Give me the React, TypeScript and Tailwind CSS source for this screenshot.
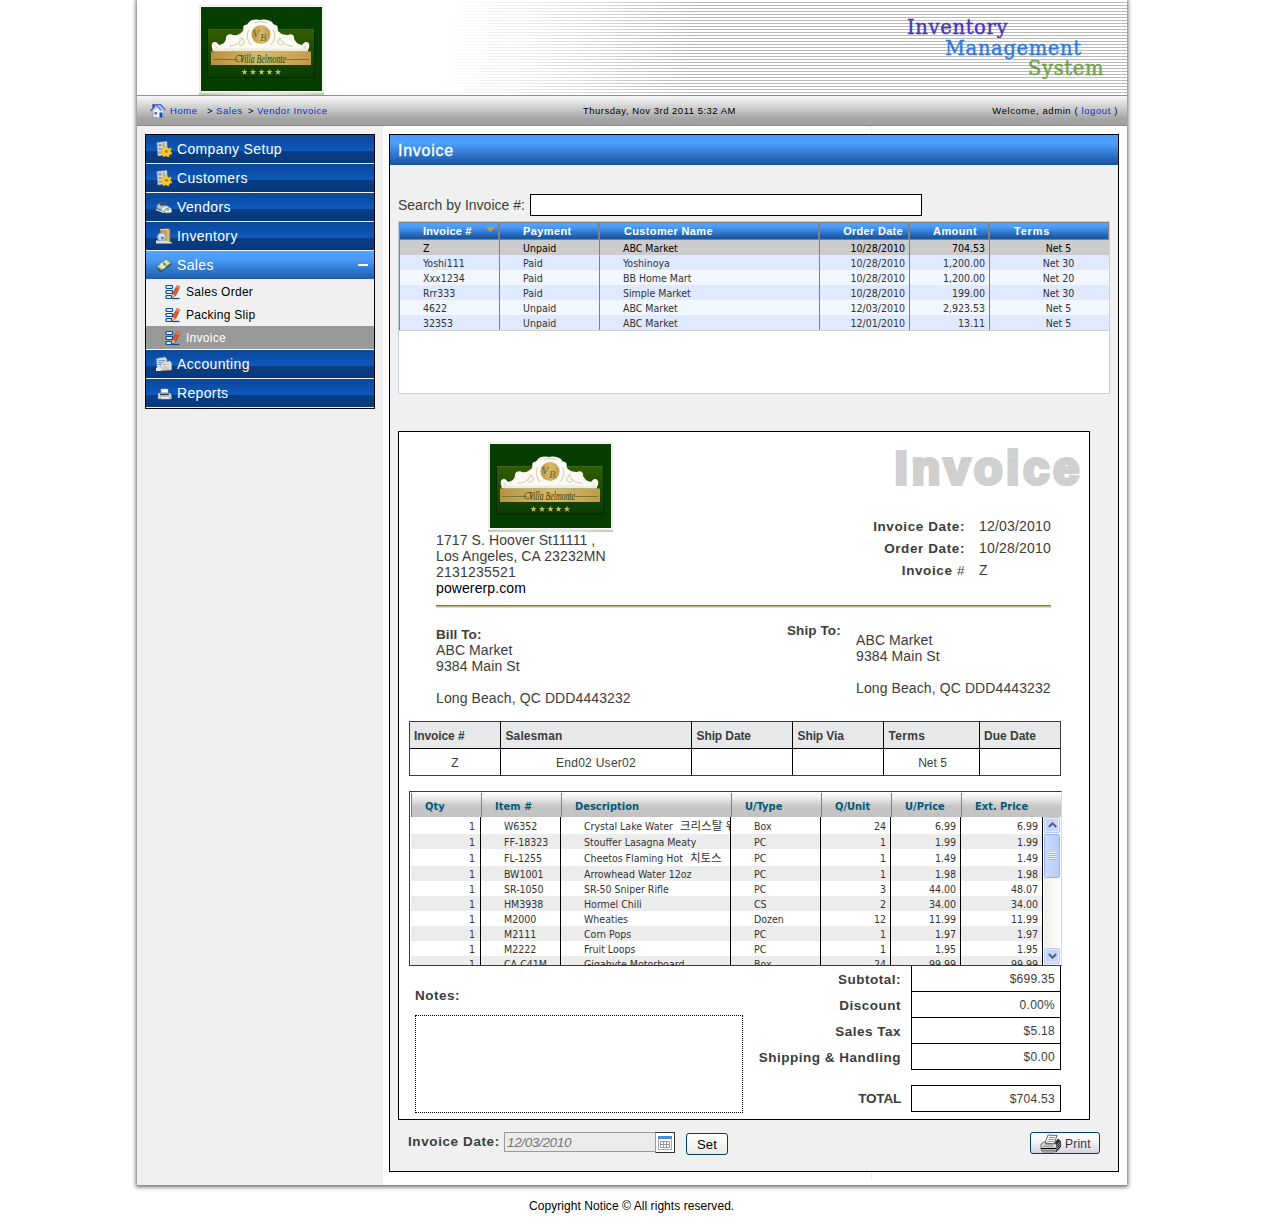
import React from "react";

function VillaLogo() {
  return (
    <svg width="125" height="90" viewBox="0 0 125 90" className="block">
      <defs>
        <linearGradient id="gold" x1="0" x2="1">
          <stop offset="0" stopColor="#b8913f" />
          <stop offset=".5" stopColor="#d8ba6c" />
          <stop offset="1" stopColor="#c39b49" />
        </linearGradient>
        <linearGradient id="panel" x1="0" x2="0" y1="0" y2="1">
          <stop offset="0" stopColor="#335c00" />
          <stop offset="1" stopColor="#083c00" />
        </linearGradient>
        <linearGradient id="logoBase" x1="0" x2="1">
          <stop offset="0" stopColor="#c4c8c2" />
          <stop offset=".5" stopColor="#e9ebe8" />
          <stop offset="1" stopColor="#c4c8c2" />
        </linearGradient>
      </defs>
      <rect width="125" height="89" fill="#e9efe4" />
      <rect y="88" width="125" height="2" fill="url(#logoBase)" />
      <rect x="1" y="1" width="123" height="86" fill="#f7fbf4" />
      <rect x="2" y="2" width="121" height="84" fill="#063d00" />
      <rect x="8.5" y="24.500" width="107" height="48" fill="url(#panel)" stroke="#042b00" />
      <path d="M9 24.500h106" stroke="#4b7722" strokeWidth=".8" />
      <path
        d="M14 45c-2-3-2-8 2-8 2 0 3 2 4 3 5-1 6-3 7-6-1-4 4-6 7-4 4 1 7-1 10-4 1-2-1-5 2-6 2 0 3-2 4-3 2-3 8-3 12-2 4-1 8 0 11 2 1 2 2 3 4 3 3 2 1 4 2 6 3 3 6 4 10 4 3-2 7 0 6 4 2 3 3 5 8 6 1-1 2-3 4-3 4 0 4 5 2 8v1H13z"
        fill="#fbfaf4"
      />
      <g fill="none" stroke="#cdb98f" strokeWidth=".8">
        <path d="M30 41c7 0 10-3 14-8M41 33c4 0 6 5 2 7-3 1-5-3-2-4M94 41c-7 0-10-3-14-8M83 33c-4 0-6 5-2 7 3 1 5-3 2-4" />
        <path d="M50 25c-3 4-2 10 2 15M74 25c3 4 2 10-2 15M16 41c2 0 2 3 0 3M107 41c-2 0-2 3 0 3M56 18c4-2 8-2 12 0" />
      </g>
      <circle cx="62" cy="29.500" r="9.500" fill="url(#gold)" />
      <text x="53.500" y="31.500" fontSize="11" fontStyle="italic" fontFamily="Liberation Serif, serif" fill="#5d6a2c">V</text>
      <text x="61" y="35.500" fontSize="10.500" fontStyle="italic" fontFamily="Liberation Serif, serif" fill="#5d6a2c">B</text>
      <rect x="12" y="46.500" width="100" height="13.500" fill="url(#gold)" />
      <rect x="15" y="43.500" width="94" height="3" fill="#f3ebd8" />
      <path d="M14 54.500h25M87 54.500h23" stroke="#6b6a2c" strokeWidth=".8" />
      <path d="M45 52c-5-4-10 0-8 4 3 2 6 0 7-3" fill="none" stroke="#2c4a12" strokeWidth=".7" />
      <text
        x="41" y="58" fontSize="12" fontStyle="italic" textLength="46" lengthAdjust="spacingAndGlyphs"
        fontFamily="Liberation Serif, serif" fill="#1d4309"
      >
        Villa Belmonte
      </text>
      {[45.500, 54, 62.500, 70.500, 79].map((x) => (
        <path
          key={x}
          transform={`translate(${x} 67)`}
          d="M0-3.200.8-1h2.300L1.300.5l.7 2.300L0 1.400l-2 1.400.7-2.300L-3.100-1h2.300z"
          fill="#c6b866"
        />
      ))}
    </svg>
  );
}

function HomeIcon() {
  return (
    <svg width="16" height="16" viewBox="0 0 16 16" className="block">
      <path d="M3 7.500v6.200l5.500 1.300 5-1.500V7L8.500 2.500z" fill="#eef2fb" stroke="#8f9cc4" strokeWidth=".8" />
      <path d="M6 2h4.500L15 7.500l-4 .5z" fill="#b9c6ee" />
      <path d="M.5 8 6 1.500h4.500L15.500 7" fill="none" stroke="#4a63cc" strokeWidth="1.200" />
      <path d="M6 1.500 11 7.500" stroke="#5c74d6" strokeWidth="1.200" />
      <path d="M2.500 1h2v2.500l-2 2z" fill="#2a3aa8" />
      <rect x="9.500" y="9.500" width="3" height="5" fill="#174fa3" />
      <rect x="4.500" y="9" width="2.500" height="2.500" fill="#5a6b99" />
    </svg>
  );
}

function GearIcon() {
  return (
    <svg width="16" height="16" viewBox="0 0 16 16" className="block">
      <path d="M1 1.500 11 .5v13L2 15z" fill="#d9dbd9" stroke="#9ca3a5" strokeWidth=".6" />
      <path d="M2.500 3h3v2.500h-3zM2.500 7h3v2h-3zM2.500 10.500h3v2h-3z" fill="#8f979b" />
      <path d="M6.500 3h2.500M6.500 5h2.500M6.500 7.500h2" stroke="#777f85" strokeWidth=".9" />
      <path
        d="m9.800 5.300 1.700.2.200 1.500 1.400.6 1.400-.8 1 1.400-1 1.300.3 1.400 1.400.6-.5 1.700-1.600.1-1 1.200.2 1.500-1.700.4-.9-1.300-1.600-.1-1 1.200-1.500-.9.400-1.600-.8-1.200-1.600-.3v-1.700l1.600-.5.600-1.400-.8-1.400z"
        fill="#f5c723"
        stroke="#c79a14"
        strokeWidth=".4"
      />
      <circle cx="10.500" cy="10.300" r="1.600" fill="#8a8f80" />
    </svg>
  );
}

function VendorIcon() {
  return (
    <svg width="16" height="16" viewBox="0 0 16 16" className="block">
      <path d="M1 6c2-1 2-2 5-2l5 5v3l-4-1-6-1.500z" fill="#b4bfc8" stroke="#75828d" strokeWidth=".6" />
      <path d="M3 4.500 8 3l1.500 3-4.500 1z" fill="#3d4b59" />
      <path d="M6 9c2-1 3-3 5-2l4.500 3v3.500l-5 .5-6-2z" fill="#eef1f2" stroke="#8793a0" strokeWidth=".6" />
      <path d="M0 9.500 9 13M9.500 9l4 1.500M8 11h5" stroke="#596a7c" strokeWidth=".8" />
      <path d="M0 10.500 8 13.500" stroke="#e3e7ea" strokeWidth="1.200" />
    </svg>
  );
}

function InventoryIcon() {
  return (
    <svg width="16" height="16" viewBox="0 0 16 16" className="block">
      <path d="M4 1.500 12 .5 14 1.500v12l-8 .5z" fill="#c9a05a" stroke="#91703a" strokeWidth=".6" />
      <path d="M4 1.500h8v12" fill="none" stroke="#e6cd94" />
      <path d="M0 12.500h3.500L12 13l4 1.500v1H0z" fill="#d9dde2" />
      <circle cx="5.500" cy="9" r="4" fill="#bcd3ea" stroke="#8ea8c4" strokeWidth=".8" />
      <path d="M3 8.500c2-2 4-2 5.500.5" stroke="#f5fbff" fill="none" />
      <circle cx="6.500" cy="10" r="1.500" fill="#6a80a0" />
    </svg>
  );
}

function SalesIcon() {
  return (
    <svg width="16" height="16" viewBox="0 0 16 16" className="block">
      <path d="m.5 10 4 5.500 11-7.500V5.500z" fill="#365144" />
      <path d="M.5 9.500 10 1.500l5.500 4.500-10 7.500z" fill="#a9c7a2" stroke="#4b6b55" strokeWidth=".7" />
      <path d="m3 9.200 7-5.700 3 2.300-7 5.500z" fill="#d8e9cb" />
      <circle cx="8" cy="7.300" r="1.900" fill="#6d9270" />
      <path d="m4 7 3.500 5 2-1.500-3.600-5z" fill="#e6ecd8" />
    </svg>
  );
}

function EditListIcon() {
  return (
    <svg width="16" height="16" viewBox="0 0 16 16" className="block">
      <rect x="1" y="1.500" width="6.500" height="3" rx=".7" fill="#dceeff" stroke="#0c4c9c" strokeWidth="1.200" />
      <rect x="1" y="6.500" width="6.500" height="3" rx=".7" fill="#dceeff" stroke="#0c4c9c" strokeWidth="1.200" />
      <rect x="1" y="11.500" width="5.500" height="3" rx=".7" fill="#dceeff" stroke="#0c4c9c" strokeWidth="1.200" />
      <path d="M7 14.500h7.500" stroke="#0c4c9c" strokeWidth="1.300" />
      <path d="m7 13.500.5-4L12 1.500l2.800 1.200-4 8.800z" fill="#dc5a2c" stroke="#8a2a12" strokeWidth=".6" />
      <path d="m7 13.500.5-3.500 2.800 1.600z" fill="#f0d0a0" />
      <path d="m12 1.500 2.800 1.200-.9 2-2.900-1.400z" fill="#ee8a70" />
    </svg>
  );
}

function AccountingIcon() {
  return (
    <svg width="16" height="16" viewBox="0 0 16 16" className="block">
      <path d="M.5 2.500 9 1l2 2v9l-10 1z" fill="#cfe0ea" stroke="#7a8c99" strokeWidth=".6" />
      <path d="M2 4.500h7M2 6.500h6M2 8.500h6" stroke="#6ba0c4" />
      <path d="m5 7 9-2 1.500 2v7L5 14.500z" fill="#eee9df" stroke="#a49c8e" strokeWidth=".6" />
      <path d="m6.500 9 7-1.300M6.500 11h7M6.500 13h7" stroke="#b8ae9c" />
      <path d="M0 12h5v3H0z" fill="#e5e8ea" />
    </svg>
  );
}

function ReportsIcon() {
  return (
    <svg width="16" height="16" viewBox="0 0 16 16" className="block">
      <path d="M5 4h7v4H5z" fill="#fff" stroke="#9ba3ad" strokeWidth=".6" />
      <path d="M2 8h12l1.500 2v4H2z" fill="#d6dade" stroke="#6b7580" strokeWidth=".6" />
      <path d="M4 9.500h9" stroke="#283440" strokeWidth="1.400" />
      <path d="M5 11.500h8l1 2.500H4.500z" fill="#f7f7f7" stroke="#929aa3" strokeWidth=".6" />
    </svg>
  );
}

function CalendarIcon() {
  return (
    <svg width="14" height="14" viewBox="0 0 14 14" className="block">
      <rect x=".5" y=".5" width="13" height="13" fill="#fff" stroke="#aaa" />
      <rect width="14" height="3" fill="#4a8fe0" />
      <path d="M2.500 5.500h9v6h-9zM5.500 5.500v6M8.500 5.500v6M2.500 8.500h9" fill="none" stroke="#999" />
    </svg>
  );
}

function PrinterIcon() {
  return (
    <svg width="21" height="19" viewBox="0 0 21 19" className="block">
      <path d="m5 9 3-8 9 .5L14 10z" fill="#fff" stroke="#555" strokeWidth=".9" />
      <path d="M9 3.500h6M8.300 5.500h6M7.500 7.500h6" stroke="#777" strokeWidth=".8" />
      <path d="m14 10 4-5 2.500 2v6L16 18z" fill="#333" stroke="#111" strokeWidth=".6" />
      <path d="m16 12 4-4M16 14l4-4M16 16l4-4" stroke="#aaa" strokeWidth=".7" />
      <path d="m1 10 3-2h2l-.6 2h8l1.600-1 1.500 2v5l-2 2H3l-2-2z" fill="#dcdcd8" stroke="#555" strokeWidth=".8" />
      <path d="M1 14.500h15" stroke="#000" strokeWidth="1.200" />
      <path d="M3 12h10" stroke="#888" />
      <path d="M2 16.500h13" stroke="#888" strokeWidth="1.500" />
    </svg>
  );
}

type NavEntry = { label: string; Icon: () => React.JSX.Element };

function NavItem({ label, Icon }: NavEntry) {
  return (
    <div className="flex h-[29px] items-center border-b border-[#f0f0f0] bg-[linear-gradient(to_bottom,#0c4899_0,#0b4ea9_25%,#0e5bbd_57%,#093d82_59%,#08387a_100%)] pl-[10px] text-white">
      <Icon />
      <span className="ml-[5px] text-[14px] leading-[28px] tracking-[0.35px]">{label}</span>
    </div>
  );
}

function Sidebar() {
  return (
    <nav className="mt-2 ml-2 w-[230px] border border-black">
      <NavItem label="Company Setup" Icon={GearIcon} />
      <NavItem label="Customers" Icon={GearIcon} />
      <NavItem label="Vendors" Icon={VendorIcon} />
      <NavItem label="Inventory" Icon={InventoryIcon} />
      <div className="flex h-7 items-center bg-[linear-gradient(to_bottom,#4ea1ff_0,#4a9bf8_30%,#1a5cab_100%)] pl-[10px] text-white">
        <SalesIcon />
        <span className="ml-[5px] grow text-[14px] leading-[28px] tracking-[0.35px]">Sales</span>
        <span className="mr-[6px] h-[2px] w-[10px] bg-white" />
      </div>
      <div className="border-b border-white bg-[#f0f0f0] pt-px text-[12px] tracking-[0.28px] text-black">
        {["Sales Order", "Packing Slip"].map((t) => (
          <div key={t} className="flex h-[23px] items-center pl-[19px]">
            <EditListIcon />
            <span className="ml-[5px]">{t}</span>
          </div>
        ))}
        <div className="flex h-[23px] items-center bg-[#999] pl-[19px] text-white">
          <EditListIcon />
          <span className="ml-[5px]">Invoice</span>
        </div>
      </div>
      <NavItem label="Accounting" Icon={AccountingIcon} />
      <NavItem label="Reports" Icon={ReportsIcon} />
    </nav>
  );
}

const invoices = [
  ["Z", "Unpaid", "ABC Market", "10/28/2010", "704.53", "Net 5"],
  ["Yoshi111", "Paid", "Yoshinoya", "10/28/2010", "1,200.00", "Net 30"],
  ["Xxx1234", "Paid", "BB Home Mart", "10/28/2010", "1,200.00", "Net 20"],
  ["Rrr333", "Paid", "Simple Market", "10/28/2010", "199.00", "Net 30"],
  ["4622", "Unpaid", "ABC Market", "12/03/2010", "2,923.53", "Net 5"],
  ["32353", "Unpaid", "ABC Market", "12/01/2010", "13.11", "Net 5"],
];

const invoiceRowColors = [
  "bg-[#ccc] text-black",
  "bg-[#dfe9ff] text-[#333]",
  "bg-[#f1f6ff] text-[#333]",
  "bg-[#dfe9ff] text-[#333]",
  "bg-[#f1f6ff] text-[#333]",
  "bg-[#dfe9ff] text-[#333]",
];

const invoiceCells = [
  "border-r border-[#808080] pl-[23px]",
  "border-r border-[#808080] pl-[23px]",
  "border-r border-[#808080] pl-[23px]",
  "border-r border-[#808080] pr-[4px] text-right",
  "border-r border-[#808080] pr-[4px] text-right",
  "pl-[18px] text-center",
];

const invoiceHeads = [
  { t: "Invoice #", c: "border-r-2 pl-[23px] tracking-[0.15px]" },
  { t: "Payment", c: "border-r-2 pl-[23px] tracking-[0.4px]" },
  { t: "Customer Name", c: "border-r-2 pl-[24px] tracking-[0.35px]" },
  { t: "Order Date", c: "border-r-2 pr-[5px] text-right tracking-[0.3px]" },
  { t: "Amount", c: "border-r-2 pr-[11px] text-right tracking-[0.4px]" },
  { t: "Terms", c: "border-r pl-[24px] tracking-[0.8px]" },
];

function InvoiceGrid() {
  return (
    <div className="ml-2 mt-[5px] h-[173px] w-[712px] border border-[#c3d3da] bg-white">
      <div className="grid h-[18px] grid-cols-[100px_100px_220px_90px_80px_119px] border-y border-l border-[#808080] bg-[linear-gradient(to_bottom,#55a5ff_0,#4a9bf8_25%,#1a58a4_90%)] text-[11px] leading-[17px] font-bold text-white">
        {invoiceHeads.map((h, i) => (
          <div key={h.t} className={`relative h-4 border-[#808080] whitespace-nowrap ${h.c}`}>
            {h.t}
            {i === 0 && (
              <svg width="9" height="5" className="absolute top-[4px] right-[3px]">
                <path d="M0 0h9L4.500 5z" fill="#e0913c" />
              </svg>
            )}
          </div>
        ))}
      </div>
      <div className="border-b border-[#d0d0d0]">
        {invoices.map((row, r) => (
          <div
            key={row[0]}
            className={`grid h-[15px] grid-cols-[100px_100px_220px_90px_80px_119px] grid-rows-[15px] border-l border-[#808080] font-['DejaVu_Sans_Condensed','DejaVu_Sans',sans-serif] text-[10.5px] leading-[17px] [font-stretch:condensed] ${invoiceRowColors[r]}`}
          >
            {row.map((cell, c) => (
              <div key={c} className={invoiceCells[c]}>{cell}</div>
            ))}
          </div>
        ))}
      </div>
    </div>
  );
}

function Hangul({ children }: { children: string }) {
  return <span className="ml-[4px] text-[11.5px]">{children}</span>;
}

const lineItems: React.ReactNode[][] = [
  ["1", "W6352", <>Crystal Lake Water <Hangul>크리스탈 워터</Hangul></>, "Box", "24", "6.99", "6.99"],
  ["1", "FF-18323", "Stouffer Lasagna Meaty", "PC", "1", "1.99", "1.99"],
  ["1", "FL-1255", <>Cheetos Flaming Hot <Hangul>치토스</Hangul></>, "PC", "1", "1.49", "1.49"],
  ["1", "BW1001", "Arrowhead Water 12oz", "PC", "1", "1.98", "1.98"],
  ["1", "SR-1050", "SR-50 Sniper Rifle", "PC", "3", "44.00", "48.07"],
  ["1", "HM3938", "Hormel Chili", "CS", "2", "34.00", "34.00"],
  ["1", "M2000", "Wheaties", "Dozen", "12", "11.99", "11.99"],
  ["1", "M2111", "Corn Pops", "PC", "1", "1.97", "1.97"],
  ["1", "M2222", "Fruit Loops", "PC", "1", "1.95", "1.95"],
  ["1", "CA-C41M", "Gigabyte Motorboard", "Box", "24", "99.99", "99.99"],
];

const lineCells = [
  "pr-[5px] text-right",
  "pl-[23px]",
  "pl-[23px]",
  "pl-[23px]",
  "pr-[4px] text-right",
  "pr-[4px] text-right",
  "pr-[4px] text-right",
];

const rowHeights = (r: number) =>
  r === 0 || r === 2 ? "h-[17px] grid-rows-[17px] leading-[18px]" : "h-[15px] grid-rows-[15px] leading-[16px]";

const lineHeads = ["Qty", "Item #", "Description", "U/Type", "Q/Unit", "U/Price", "Ext. Price"];

function ScrollBar() {
  return (
    <div className="ml-px flex h-full w-[16px] shrink-0 flex-col bg-[linear-gradient(to_right,#f0efea,#fdfdfb)]">
      <div className="flex h-4 items-center justify-center rounded-[2px] border border-[#b4c8f6] bg-[#c6d5fd] shadow-[inset_0_0_0_1px_#e3ebff]">
        <svg width="9" height="6"><path d="m.8 5 3.700-3.700L8.200 5" fill="none" stroke="#4d6185" strokeWidth="2" /></svg>
      </div>
      <div className="mt-px flex h-[44px] flex-col items-center justify-center gap-px rounded-[2px] border border-[#98b4ee] bg-[linear-gradient(to_right,#cbdafe,#b8cbf8)]">
        {[0, 1, 2, 3].map((i) => (
          <span key={i} className="h-px w-[7px] bg-[#8cb0f8] shadow-[0_-1px_0_#eef4fe]" />
        ))}
      </div>
      <div className="mt-auto mb-px flex h-4 items-center justify-center rounded-[2px] border border-[#b4c8f6] bg-[#c6d5fd] shadow-[inset_0_0_0_1px_#e3ebff]">
        <svg width="9" height="6"><path d="m.8 1 3.700 3.700L8.200 1" fill="none" stroke="#4d6185" strokeWidth="2" /></svg>
      </div>
    </div>
  );
}

function LineItems() {
  return (
    <div className="mt-[15px] ml-[10px] h-[175px] w-[653px] border border-[#3c3c3c] border-r-[#d8d8d8] bg-white pt-px pl-px font-['DejaVu_Sans_Condensed','DejaVu_Sans','Noto_Sans_CJK_KR',sans-serif] [font-stretch:condensed]">
      <div className="grid h-[24px] grid-cols-[70px_80px_170px_90px_70px_70px_100px] grid-rows-[24px] bg-[linear-gradient(to_bottom,#fff_0,#e8e8e8_25%,#c6c6c6_55%,#c3c3c3_100%)] text-[11px] leading-[27px] font-bold text-[#055a78]">
        {lineHeads.map((t) => (
          <div key={t} className="border-l border-[#808080] pl-[13px]">{t}</div>
        ))}
      </div>
      <div className="flex h-[148px]">
        <div className="w-[632px] shrink-0 overflow-hidden border-r border-black">
          {lineItems.map((row, r) => (
            <div
              key={r}
              className={`grid grid-cols-[70px_80px_170px_90px_70px_70px_81px] text-[10.5px] text-[#333] ${rowHeights(r)} ${r % 2 ? "bg-[#ececec]" : "bg-white"}`}
            >
              {row.map((cell, c) => (
                <div key={c} className={`overflow-hidden whitespace-nowrap ${c < 6 ? "border-r border-black" : ""} ${lineCells[c]}`}>
                  {cell}
                </div>
              ))}
            </div>
          ))}
        </div>
        <ScrollBar />
      </div>
    </div>
  );
}

function SummaryTable() {
  return (
    <div className="mt-[15px] ml-[10px] w-[652px] border border-[#3c3c3c] text-[12px]">
      <div className="grid h-[27px] grid-cols-[91px_191px_101px_91px_96px_80px] grid-rows-[26px] border-b border-black bg-[#e6e8ea] leading-[28px] font-bold">
        <div className="border-r border-black pl-1 tracking-[-0.1px]">Invoice #</div>
        <div className="border-r border-black pl-[4.5px] tracking-[0.1px]">Salesman</div>
        <div className="border-r border-black pl-[4.5px] tracking-[-0.1px]">Ship Date</div>
        <div className="border-r border-black pl-[4.5px] tracking-[-0.1px]">Ship Via</div>
        <div className="border-r border-black pl-[4.5px] tracking-[0.3px]">Terms</div>
        <div className="pl-1">Due Date</div>
      </div>
      <div className="grid h-[26px] grid-cols-[91px_191px_101px_91px_96px_80px] grid-rows-[26px] text-center leading-[28px] tracking-[0.28px]">
        <div className="border-r border-black">Z</div>
        <div className="border-r border-black">End02 User02</div>
        <div className="border-r border-black" />
        <div className="border-r border-black" />
        <div className="border-r border-black pl-[2px] tracking-normal">Net 5</div>
        <div />
      </div>
    </div>
  );
}

function Totals() {
  const rows = [
    ["Subtotal:", "$699.35"],
    ["Discount", "0.00%"],
    ["Sales Tax", "$5.18"],
    ["Shipping & Handling", "$0.00"],
  ];
  return (
    <div className="w-[318px]">
      {rows.map(([k, v]) => (
        <div key={k} className="flex h-[26px]">
          <div className="w-[158px] text-right text-[13.5px] leading-[27px] font-bold tracking-[0.5px] whitespace-nowrap">{k}</div>
          <div className="ml-[10px] w-[150px] border-x border-b border-black pr-[5px] text-right text-[12px] leading-[27px] tracking-[0.28px]">{v}</div>
        </div>
      ))}
      <div className="mt-[15px] flex h-[27px]">
        <div className="w-[158px] text-right text-[13.5px] leading-[27px] font-bold tracking-[-0.2px]">TOTAL</div>
        <div className="ml-[10px] w-[150px] border border-black pr-[5px] text-right text-[12px] leading-[27px] tracking-[0.28px]">$704.53</div>
      </div>
    </div>
  );
}

function Sheet() {
  return (
    <section className="mt-[37px] ml-2 h-[689px] w-[692px] border border-black bg-white text-[#3c3c3c]">
      <div className="flex h-[173px]">
        <div className="w-[400px] pt-[10px] pl-[37px] text-[14px] leading-4 tracking-[0.1px]">
          <div className="ml-[52px]">
            <VillaLogo />
          </div>
          <div>1717 S. Hoover St11111 ,</div>
          <div>Los Angeles, CA 23232MN</div>
          <div className="tracking-[0.2px]">2131235521</div>
          <div className="text-black">powererp.com</div>
        </div>
        <div className="w-[290px]">
          <div className="mt-[8px] mr-[6px] text-right text-[46.5px] leading-[57px] font-bold tracking-[4px] text-[#d0d0d0] [-webkit-text-stroke:4px_#d0d0d0]">Invoice</div>
          <div className="mt-[18px] grid auto-rows-[22px] grid-cols-[166px_1fr] gap-x-[14px] text-[14px] leading-[22px]">
            <div className="text-right text-[13.5px] leading-[23px] font-bold tracking-[0.6px]">Invoice Date:</div>
            <div className="tracking-[0.2px]">12/03/2010</div>
            <div className="text-right text-[13.5px] leading-[23px] font-bold tracking-[0.6px]">Order Date:</div>
            <div className="tracking-[0.2px]">10/28/2010</div>
            <div className="text-right text-[13.5px] leading-[23px] font-bold tracking-[0.6px]">Invoice <span className="font-normal">#</span></div>
            <div>Z</div>
          </div>
        </div>
      </div>
      <div className="ml-[37px] h-[3px] w-[615px] border-t border-[#77777c] bg-[linear-gradient(to_bottom,#c3b873_50%,#e4deb0_50%)]" />
      <div className="flex h-[98px] text-[14px] leading-4 tracking-[0.1px]">
        <div className="ml-[37px] w-[351px] pt-[18px]">
          <div className="text-[13.5px] leading-[17px] font-bold">Bill To:</div>
          <div className="-mt-px">ABC Market</div>
          <div>9384 Main St</div>
          <div className="mt-4">Long Beach, QC DDD4443232</div>
        </div>
        <div className="w-[69px] pt-[14px] text-[13.5px] leading-[17px] font-bold">Ship To:</div>
        <div className="pt-[24px]">
          <div>ABC Market</div>
          <div>9384 Main St</div>
          <div className="mt-4">Long Beach, QC DDD4443232</div>
        </div>
      </div>
      <SummaryTable />
      <LineItems />
      <div className="flex">
        <div className="ml-[16px] w-[328px]">
          <div className="pt-[21px] text-[13.5px] leading-[17px] font-bold tracking-[0.5px]">Notes:</div>
          <div className="mt-[11px] h-[98px] border border-dotted border-black" />
        </div>
        <Totals />
      </div>
    </section>
  );
}

function ActionBar() {
  return (
    <div className="mt-[12px] flex items-start">
      <div className="ml-[18px] w-[96px] text-[13.5px] leading-[20px] font-bold tracking-[0.6px] whitespace-nowrap text-[#3c3c3c]">Invoice Date:</div>
      <div className="h-5 w-[152px] border border-r-0 border-[#999] bg-[#ebebe9] pl-[2px] text-[13.500px] leading-[19px] tracking-[-0.35px] text-[#777] italic">
        12/03/2010
      </div>
      <div className="-ml-px flex h-[21px] w-5 items-center justify-center border border-[#333] border-l-[#999] bg-white">
        <CalendarIcon />
      </div>
      <button className="mt-px ml-[11px] h-[22px] w-[42px] rounded-[3px] border border-[#003c74] bg-[linear-gradient(to_bottom,#fff,#ecebe5)] text-[13px] leading-[22px] tracking-[0.2px] text-black">Set</button>
      <button className="ml-auto mr-[18px] flex h-[22px] w-[70px] items-center rounded-[3px] border border-[#003c74] bg-[linear-gradient(to_bottom,#fff_20%,#d5d3e2_100%)] pl-[9px] text-[12px] text-[#333]">
        <PrinterIcon />
        <span className="ml-[4px] pt-px tracking-[0.2px]">Print</span>
      </button>
    </div>
  );
}

export default function App() {
  return (
    <div className="h-[1230px] w-[1263px] overflow-hidden bg-white font-['Liberation_Sans',Arial,sans-serif]">
      <div className="ml-[137px] h-[1186px] w-[990px] border-b border-[#8a8a8a] bg-white shadow-[0_0_4px_1px_rgba(0,0,0,0.6)]">
        <header className="relative flex h-[96px] justify-between border-b border-[#8f8f8f] bg-[repeating-linear-gradient(to_bottom,transparent_0,transparent_2px,#b9b9b9_2px,#b9b9b9_3px)]">
          <div className="absolute inset-0 bg-[linear-gradient(97deg,#fff_31%,rgba(255,255,255,0.6)_43%,transparent_56%)]" />
          <div className="relative mt-[5px] ml-[62px]">
            <VillaLogo />
          </div>
          <div className="relative mt-[17px] mr-[22px] w-[198px] font-['DejaVu_Serif',serif] text-[19.5px] leading-[21px] tracking-[0.65px] [-webkit-text-stroke:0.4px_currentColor]">
            <div className="text-[#4a35b8]">Inventory</div>
            <div className="ml-[38px] text-[#2c7bdc]">Management</div>
            <div className="-mt-px ml-[121px] text-[#74a048]">System</div>
          </div>
        </header>
        <div className="flex h-[30px] items-center border-b border-[#888] bg-[linear-gradient(to_bottom,#f6f6f6_0,#d4d4d4_35%,#a3a3a3_80%,#a0a0a0_100%)] pt-px text-[9.5px] tracking-[0.55px] whitespace-nowrap text-black">
          <div className="flex w-[446px] items-center pl-[13px]">
            <HomeIcon />
            <span className="ml-[4px] w-[37px] text-[#0033cc]">Home</span>
            <span className="w-[9px]">&gt;</span>
            <span className="w-[32px] text-[#0033cc]">Sales</span>
            <span className="w-[9px]">&gt;</span>
            <span className="text-[#0033cc]">Vendor Invoice</span>
          </div>
          <div className="tracking-[0.5px]">Thursday, Nov 3rd 2011 5:32 AM</div>
          <div className="ml-auto pr-[9px] tracking-[0.6px]">
            Welcome, admin ( <span className="text-[#0033cc]">logout</span> )
          </div>
        </div>
        <div className="flex h-[1059px]">
          <aside className="w-[246px] bg-[#f0f0f0]">
            <Sidebar />
          </aside>
          <div className="w-[744px] bg-[linear-gradient(#eee,#eee)] bg-[length:1px_1054px] bg-[position:488px_0] bg-no-repeat">
            <main className="mt-2 ml-[6px] h-[1038px] w-[730px] border border-black bg-[#f0f0f0]">
              <h1 className="h-[30px] bg-[linear-gradient(to_bottom,#4a9bf8_0,#4ea1ff_25%,#17529f_100%)] pl-2 text-[16px] leading-[32px] tracking-[0.75px] text-white [-webkit-text-stroke:0.3px_white]">Invoice</h1>
              <div className="mt-[29px] ml-2 flex h-[22px] items-center text-[14px] text-[#3c3c3c]">
                <span className="w-[132px]">Search by Invoice #:</span>
                <div className="h-[22px] w-[392px] border border-black bg-white" />
              </div>
              <InvoiceGrid />
              <Sheet />
              <ActionBar />
            </main>
          </div>
        </div>
      </div>
      <footer className="mt-[13px] pl-[529px] text-[12px] leading-[14px] tracking-[0.06px] text-black">Copyright Notice © All rights reserved.</footer>
    </div>
  );
}
